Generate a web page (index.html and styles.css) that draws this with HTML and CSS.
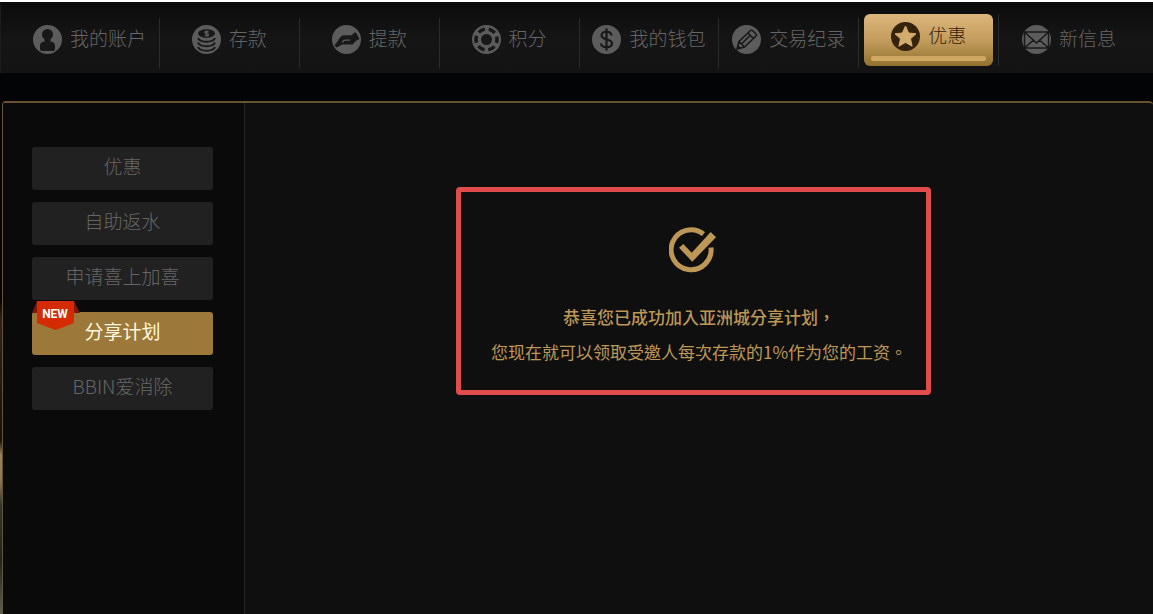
FILE: index.html
```html
<!DOCTYPE html>
<html lang="zh-CN">
<head>
  <meta charset="utf-8">
  <title>分享计划</title>
  <link rel="stylesheet" href="styles.css">
</head>
<body>
  <nav id="topnav">
    <a class="tab" href="#account">
      <svg class="icon" viewBox="0 0 29 29">
        <circle class="disc" cx="14.5" cy="14.5" r="14.5"/>
        <circle class="cut" cx="14.5" cy="9.5" r="5.5"/>
        <path class="cut" d="M11.5 13h6v3.5q4.5.5 4.500 4v3.500q0 2-2 2H9q-2 0-2-2v-3.500q0-3.500 4.500-4z"/>
      </svg>
      <span>我的账户</span>
    </a>
    <a class="tab" href="#deposit">
      <svg class="icon" viewBox="0 0 29 29">
        <circle class="disc" cx="14.5" cy="14.5" r="14.5"/>
        <ellipse class="cut" cx="14.5" cy="8.500" rx="8.500" ry="4.200"/>
        <path class="line" d="M6 13c2 5 15 5 17 0M6 17.500c2 5 15 5 17 0M6 22c2 5 15 5 17 0"/>
        <path class="mark" d="M16.500 7.200c-1-1-3.700-1-3.700.300 0 1.500 3.800.700 3.800 2.300 0 1.300-3 1.300-4 .2M14.700 5.500v6"/>
      </svg>
      <span>存款</span>
    </a>
    <a class="tab" href="#withdraw">
      <svg class="icon" viewBox="0 0 29 29">
        <circle class="disc" cx="14.5" cy="14.5" r="14.5"/>
        <path class="cut" d="M2.500 20.500L8.500 12q1.200-1.700 3.500-1.700h7.500L22.500 7.500h1.500l3.500 6.500-3 1.500-4 4h-10.500L7.500 21l-3 1.500z"/>
        <path class="mark" d="M10.500 17.500q.500-2.300 3-2.300h4.500"/>
      </svg>
      <span>提款</span>
    </a>
    <a class="tab" href="#points">
      <svg class="icon" viewBox="0 0 29 29">
        <circle class="disc" cx="14.5" cy="14.5" r="14.5"/>
        <circle class="ring" cx="14.5" cy="14.5" r="10.500" stroke-dasharray="6.996 4" stroke-dashoffset="3.498"/>
        <circle class="cut" cx="14.5" cy="14.5" r="5.500"/>
      </svg>
      <span>积分</span>
    </a>
    <a class="tab" href="#wallet">
      <svg class="icon" viewBox="0 0 29 29">
        <circle class="disc" cx="14.5" cy="14.5" r="14.5"/>
        <path class="dollar" d="M19.500 10.500c-.300-5-10-5-10 0 0 5 10.500 2.500 10.500 8 0 5-10.500 5-11 0M14.500 3.500v22"/>
      </svg>
      <span>我的钱包</span>
    </a>
    <a class="tab" href="#history">
      <svg class="icon" viewBox="0 0 29 29">
        <circle class="disc" cx="14.5" cy="14.5" r="14.5"/>
        <path class="pencil" d="M5 24l2-7.500L18.500 5.500q1-1 2 0l3.500 3.500q1 1 0 2L12.500 22zM16 8l5.500 5.500M7 16.500l5.500 5.500M10 18.500l8.500-8.500"/>
        <path class="cut" d="M5 24l1-4 3 3z"/>
      </svg>
      <span>交易纪录</span>
    </a>
    <a class="tab active" href="#promo">
      <span class="gold">
        <svg class="icon" viewBox="0 0 29 29">
          <circle cx="14.5" cy="14.5" r="14.5" fill="#35240b"/>
          <path d="M14.500 4l3.100 7 7.400.8-5.500 5 1.600 7.400-6.600-3.800-6.600 3.800 1.600-7.400-5.500-5 7.400-.8z" fill="#d3ab6d" stroke="#d3ab6d" stroke-linejoin="round"/>
        </svg>
        <span>优惠</span>
      </span>
    </a>
    <a class="tab" href="#messages">
      <svg class="icon" viewBox="0 0 29 29">
        <circle class="disc" cx="14.5" cy="14.5" r="14.5"/>
        <path class="line thin" d="M2.500 7h24v16h-24zM3 7.500L14.500 18 26 7.500M3 22.500l8.500-7.500M26 22.500L17.500 15"/>
      </svg>
      <span>新信息</span>
    </a>
  </nav>

  <div id="panel">
    <aside id="sidebar">
      <a class="side-btn" href="#offers">优惠</a>
      <a class="side-btn" href="#rebate">自助返水</a>
      <a class="side-btn" href="#bonus">申请喜上加喜</a>
      <a class="side-btn current" href="#share">
        <svg class="badge" viewBox="0 0 48 30">
          <path d="M5 0L0 12h48L42 0z" fill="#7d1906"/>
          <path d="M5 0h37v22L23.500 29 5 22z" fill="#d52b04"/>
          <text x="23" y="17" text-anchor="middle">NEW</text>
        </svg>
        分享计划
      </a>
      <a class="side-btn" href="#bbin">BBIN爱消除</a>
    </aside>

    <main id="content">
      <div class="notice" lang="zh-TW">
        <svg class="check" viewBox="0 0 48 46">
          <path d="M34.500 7A20 20 0 1 0 42 20.500" fill="none" stroke="#bd9756" stroke-width="5"/>
          <path d="M10 20.700L14.300 17l8.400 8.700L41.700 5l5.300 5.300L23.300 34.700z" fill="#bd9756"/>
        </svg>
        <p class="title">恭喜您已成功加入亚洲城分享计划，</p>
        <p>您现在就可以领取受邀人每次存款的1%作为您的工资。</p>
      </div>
    </main>
  </div>
</body>
</html>
```
FILE: styles.css
```css
* {
  box-sizing: border-box;
}

body {
  margin: 0;
  min-height: 100vh;
  display: flex;
  flex-direction: column;
  border-top: 2px solid #fff;
  background: linear-gradient(#030406 0, #030406 300px, #2b2618 320px, #15120c 440px, #97825a 455px, #8d7a52 480px, #2b3a31 505px, #1b2722 560px, #59605a 100%);
  font-family: "Noto Sans CJK SC", sans-serif;
  font-size: 19px;
  font-weight: 300;
}

a {
  color: #666;
  text-decoration: none;
}

#topnav {
  display: grid;
  grid-template-columns: repeat(8, minmax(0, 1fr));
  height: 71px;
  padding: 16px 14px 0 19px;
  background: linear-gradient(#0b0b0b, #151515 50%, #131313);
  border-left: 1px solid #1d1d1d;
  border-radius: 4px 0 0 0;
}

.tab {
  display: flex;
  align-items: center;
  justify-content: center;
  gap: 8px;
  height: 50px;
  padding-bottom: 8px;
  border-right: 1px solid #2b2b2b;
  line-height: 26px;
  white-space: nowrap;
}

.tab span {
  padding-bottom: 2px;
}

.tab:last-child {
  border-right: none;
}

.tab.active {
  height: 52px;
  margin-top: -4px;
  padding: 0 5px;
}

.tab .gold {
  flex: 1;
  display: flex;
  align-items: center;
  justify-content: center;
  gap: 8px;
  height: 52px;
  padding-bottom: 8px;
  position: relative;
  border-radius: 6px;
  background: linear-gradient(#ddb67d, #c39d5d 50%, #92712e);
  color: #35240b;
}

.gold::after {
  content: "";
  position: absolute;
  left: 7px;
  right: 7px;
  bottom: 5px;
  height: 5px;
  border-radius: 2px;
  background: #d0a663;
}

.icon {
  width: 29px;
  height: 29px;
}

.disc {
  fill: #5c5c5c;
}

.cut {
  fill: #181818;
}

.line,
.ring,
.dollar,
.pencil {
  fill: none;
  stroke: #181818;
  stroke-width: 2;
}

.thin {
  stroke-width: 1.5;
}

.ring {
  stroke-width: 3.5;
}

.dollar {
  stroke-width: 2.2;
}

.pencil {
  stroke-width: 1.6;
}

.mark {
  fill: none;
  stroke: #5c5c5c;
  stroke-width: 1.3;
}

#panel {
  flex: 1;
  display: flex;
  margin: 28px 0 0 2px;
  border: 2px solid #69512f;
  border-left-width: 1px;
  border-right: none;
  border-bottom: none;
  border-radius: 4px 4px 0 0;
  background: #0f0f0f;
}

#sidebar {
  width: 242px;
  padding: 44px 31px 40px 29px;
  display: flex;
  flex-direction: column;
  gap: 12px;
  background: #0a0a0a;
  border-right: 1px solid #262626;
}

.side-btn {
  position: relative;
  height: 43px;
  border-radius: 3px;
  background: #212121;
  line-height: 38px;
  text-align: center;
}

.side-btn.current {
  background: #9c783a;
  color: #fff8df;
  font-weight: 400;
}

.badge {
  position: absolute;
  left: 0;
  top: -11px;
  width: 48px;
  height: 30px;
}

.badge text {
  fill: #fff;
  font-family: Roboto, sans-serif;
  font-size: 12px;
  font-weight: 700;
}

#content {
  flex: 1;
  padding: 84px 12px 40px 0;
}

.notice {
  width: 475px;
  margin: 0 auto;
  padding: 35px 14px 21px 26px;
  border: 5px solid #e04c4c;
  border-radius: 4px;
  color: #bd9756;
  font-family: "Noto Sans CJK TC", sans-serif;
  font-size: 17px;
  font-weight: 400;
  text-align: center;
}

.check {
  display: block;
  width: 48px;
  height: 46px;
  margin: 0 auto 26px 182px;
}

.notice p {
  margin: 0;
  line-height: 35px;
  white-space: nowrap;
}

.notice .title {
  font-weight: 500;
}
```
